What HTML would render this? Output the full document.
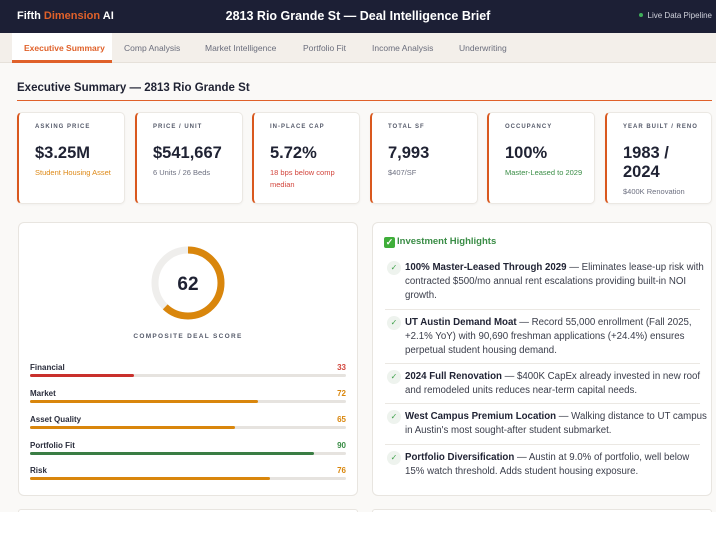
<!DOCTYPE html>
<html><head><meta charset="utf-8"><style>
*{box-sizing:border-box;margin:0;padding:0}
body{width:716px;height:537px;overflow:hidden;background:#fff;font-family:"Liberation Sans",sans-serif;color:#1f2233;position:relative}
.hdr{position:absolute;left:0;top:0;width:716px;height:33px;background:#1c1f35;color:#fff}
.logo{position:absolute;left:17px;top:10px;font-size:11px;font-weight:bold}
.logo span{color:#e0612a}
.ttl{position:absolute;left:0;width:716px;top:9px;text-align:center;font-size:12.5px;font-weight:bold}
.live{position:absolute;right:4px;top:11px;font-size:8px;color:#d0d2dc}
.live i{display:inline-block;width:4px;height:4px;border-radius:50%;background:#3fae5a;margin-right:5px;vertical-align:1px}
.tabs{position:absolute;left:0;top:33px;width:716px;height:30px;background:#f3efea;border-bottom:1px solid #e6e1da}
.tab{position:absolute;top:10px;font-size:8.5px;color:#6a6d7c}
.tab.a{left:12px;top:0;height:30px;width:100px;background:#fff;color:#e0612a;font-weight:bold;padding-top:10px;padding-left:12px;border-bottom:3px solid #e0612a}
.main{position:absolute;left:0;top:63px;width:716px;height:449px;background:#faf9f7}
h2{position:absolute;left:17px;top:82px;font-size:11.5px;font-weight:bold;color:#1f2233}
.rule{position:absolute;left:17px;top:100px;width:695px;height:1px;background:#e0612a}
.card{position:absolute;top:112px;height:92px;background:#fff;border-radius:5px;border:1px solid #ebe8e3;border-left:2px solid #d9581e;box-shadow:0 1px 2px rgba(0,0,0,.04);padding:11px 0 0 16px}
.lb{font-size:6px;letter-spacing:1px;color:#555a6a;font-weight:bold}
.v{font-size:16.5px;font-weight:bold;margin-top:14px;line-height:19px;color:#1f2233}
.s{font-size:7.5px;margin-top:4px;line-height:12px;color:#6d7080}
.panel{position:absolute;top:222px;height:274px;background:#fff;border:1px solid #e8e5e0;border-radius:6px}
.bl{position:absolute;left:30px;width:316px;font-size:8px;font-weight:bold;color:#2a2d3c}
.bl b{position:absolute;right:0;top:0}
.bar{position:absolute;left:0;top:11px;width:316px;height:3px;background:#e6e3df;border-radius:2px}
.bar i{display:block;height:3px;border-radius:2px}
.hl{position:absolute;left:384px;top:236px;font-size:9.5px;font-weight:bold;color:#3a8d46}
.hl em{display:inline-block;width:11px;height:11px;background:#3fae3a;border-radius:2px;color:#fff;font-style:normal;font-size:9px;text-align:center;line-height:11px;vertical-align:-1px;margin-right:2px}
.it{position:absolute;left:405px;width:302px;font-size:9.7px;line-height:14px;color:#3a3d4a}
.it b{color:#1f2233}
.ck{position:absolute;left:-18px;top:0;width:14px;height:14px;border-radius:50%;background:#eef3ee;color:#3fa04a;font-size:8px;text-align:center;line-height:14px}
.sep{position:absolute;left:385px;width:315px;height:1px;background:#ebe8e3}
</style></head><body>
<div class="hdr"><div class="logo">Fifth <span>Dimension</span> AI</div><div class="ttl">2813 Rio Grande St — Deal Intelligence Brief</div><div class="live"><i></i>Live Data Pipeline</div></div>
<div class="tabs">
<div class="tab a">Executive Summary</div>
<div class="tab" style="left:124px">Comp Analysis</div>
<div class="tab" style="left:205px">Market Intelligence</div>
<div class="tab" style="left:303px">Portfolio Fit</div>
<div class="tab" style="left:372px">Income Analysis</div>
<div class="tab" style="left:459px">Underwriting</div>
</div>
<div class="main"></div>
<h2>Executive Summary — 2813 Rio Grande St</h2>
<div class="rule"></div>
<div class="card" style="left:17px;width:108px"><div class="lb">ASKING PRICE</div><div class="v">$3.25M</div><div class="s" style="color:#de8a18">Student Housing Asset</div></div>
<div class="card" style="left:135px;width:108px"><div class="lb">PRICE / UNIT</div><div class="v">$541,667</div><div class="s">6 Units / 26 Beds</div></div>
<div class="card" style="left:252px;width:108px"><div class="lb">IN-PLACE CAP</div><div class="v">5.72%</div><div class="s" style="color:#d2453c">18 bps below comp<br>median</div></div>
<div class="card" style="left:370px;width:108px"><div class="lb">TOTAL SF</div><div class="v">7,993</div><div class="s">$407/SF</div></div>
<div class="card" style="left:487px;width:108px"><div class="lb">OCCUPANCY</div><div class="v">100%</div><div class="s" style="color:#3a8d46">Master-Leased to 2029</div></div>
<div class="card" style="left:605px;width:107px"><div class="lb">YEAR BUILT / RENO</div><div class="v">1983 /<br>2024</div><div class="s">$400K Renovation</div></div>

<div class="panel" style="left:18px;width:340px"></div>
<svg style="position:absolute;left:150px;top:245px" width="76" height="76" viewBox="0 0 76 76">
<circle cx="38" cy="38" r="33" fill="none" stroke="#efeeec" stroke-width="7"/>
<circle cx="38" cy="38" r="33" fill="none" stroke="#d9860c" stroke-width="7" stroke-dasharray="128.6 207.3" transform="rotate(-90 38 38)"/>
<text x="38" y="45" text-anchor="middle" font-family="Liberation Sans" font-weight="bold" font-size="19" fill="#1f2233">62</text>
</svg>
<div style="position:absolute;left:18px;width:340px;top:333px;text-align:center;font-size:6.5px;letter-spacing:1.3px;color:#555a6a;font-weight:bold">COMPOSITE DEAL SCORE</div>
<div class="bl" style="top:363px">Financial<b style="color:#d2453c">33</b><div class="bar"><i style="width:33%;background:#c9302c"></i></div></div>
<div class="bl" style="top:389px">Market<b style="color:#d9860c">72</b><div class="bar"><i style="width:72%;background:#d9860c"></i></div></div>
<div class="bl" style="top:415px">Asset Quality<b style="color:#d9860c">65</b><div class="bar"><i style="width:65%;background:#d9860c"></i></div></div>
<div class="bl" style="top:441px">Portfolio Fit<b style="color:#3a8d46">90</b><div class="bar"><i style="width:90%;background:#3a7d44"></i></div></div>
<div class="bl" style="top:466px">Risk<b style="color:#d9860c">76</b><div class="bar"><i style="width:76%;background:#d9860c"></i></div></div>

<div class="panel" style="left:372px;width:340px"></div>
<div class="hl"><em>✓</em>Investment Highlights</div>
<div class="it" style="top:261px"><span class="ck">✓</span><b>100% Master-Leased Through 2029</b> — Eliminates lease-up risk with contracted $500/mo annual rent escalations providing built-in NOI growth.</div>
<div class="sep" style="top:309px"></div>
<div class="it" style="top:316px"><span class="ck">✓</span><b>UT Austin Demand Moat</b> — Record 55,000 enrollment (Fall 2025, +2.1% YoY) with 90,690 freshman applications (+24.4%) ensures perpetual student housing demand.</div>
<div class="sep" style="top:363px"></div>
<div class="it" style="top:370px"><span class="ck">✓</span><b>2024 Full Renovation</b> — $400K CapEx already invested in new roof and remodeled units reduces near-term capital needs.</div>
<div class="sep" style="top:403px"></div>
<div class="it" style="top:410px"><span class="ck">✓</span><b>West Campus Premium Location</b> — Walking distance to UT campus in Austin's most sought-after student submarket.</div>
<div class="sep" style="top:444px"></div>
<div class="it" style="top:451px"><span class="ck">✓</span><b>Portfolio Diversification</b> — Austin at 9.0% of portfolio, well below 15% watch threshold. Adds student housing exposure.</div>

<div class="panel" style="left:18px;width:340px;top:509px;height:3px;border-bottom:none;border-radius:6px 6px 0 0"></div>
<div class="panel" style="left:372px;width:340px;top:509px;height:3px;border-bottom:none;border-radius:6px 6px 0 0"></div>
</body></html>
